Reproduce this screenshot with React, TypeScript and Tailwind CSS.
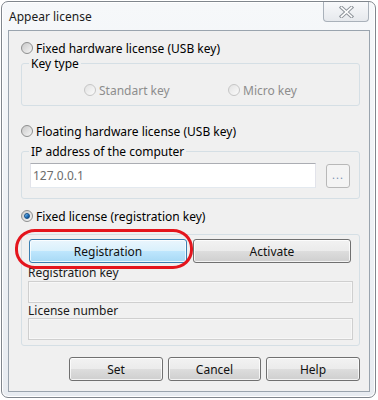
import React from 'react';

const Radio: React.FC<{ checked?: boolean; disabled?: boolean }> = ({ checked, disabled }) => (
  <span
    className={`w-[12px] h-[12px] rounded-full border shrink-0 flex items-center justify-center ${
      disabled
        ? 'border-[#c6c6c6] bg-gradient-to-br from-[#e2e2e2] to-[#fbfbfb]'
        : 'border-[#8e8f8f] bg-gradient-to-br from-[#c9c9c9] to-[#f6f6f6]'
    }`}
  >
    {checked && (
      <span className="w-[6px] h-[6px] rounded-full bg-gradient-to-br from-[#8fd0f6] via-[#2a7cc8] to-[#0d3f7a] border border-[#154f86]" />
    )}
  </span>
);

const Btn: React.FC<{ label: string; hot?: boolean; className?: string }> = ({ label, hot, className }) => (
  <div
    className={`h-[24px] rounded-[3px] border flex items-center justify-center text-[#111] shadow-[inset_0_0_0_1px_rgba(255,255,255,0.75)] ${
      hot
        ? 'border-[#3c7fb1] bg-[linear-gradient(#eaf6fd_0%,#d9f0fc_50%,#bee6fd_51%,#a7d9f5_100%)]'
        : 'border-[#707070] bg-[linear-gradient(#f2f2f2_0%,#ebebeb_50%,#dddddd_51%,#cfcfcf_100%)]'
    } ${className ?? ''}`}
  >
    {label}
  </div>
);

export default function App() {
  return (
    <div
      className="w-[378px] h-[400px] bg-white pt-[1px] pl-[1px] text-[12px] leading-[15px] text-black"
      style={{ fontFamily: '"Noto Sans", "Liberation Sans", sans-serif' }}
    >
      {/* Window frame */}
      <div className="w-[375px] h-[397px] rounded-[7px] border border-[#80868d] bg-gradient-to-b from-[#f6f8fa] to-[#e8ecf1] pl-[6px] pr-[5px] pb-[5px] flex flex-col shadow-[inset_0_0_0_1px_#ffffff]">
        {/* Title bar */}
        <div className="h-[28px] flex items-start justify-between shrink-0">
          <span className="mt-[7px] ml-[1px] text-[#1b1b1b]">Appear license</span>
          <div className="w-[46px] h-[20px] mr-[1px] rounded-b-[4px] border border-t-0 border-[#a9b1ba] bg-gradient-to-b from-[#f8f9fb] to-[#e6e9ed] flex items-center justify-center">
            <svg width="15" height="12" viewBox="0 0 15 12">
              <path d="M2.5 1.5 L12.5 10.5 M12.5 1.5 L2.5 10.5" stroke="#8f959c" strokeWidth="3.6" strokeLinecap="square" />
              <path d="M2.5 1.5 L12.5 10.5 M12.5 1.5 L2.5 10.5" stroke="#ffffff" strokeWidth="1.6" strokeLinecap="square" />
            </svg>
          </div>
        </div>

        {/* Client area */}
        <div className="flex-1 border border-[#9aa4ae] bg-[#f0f0f0] relative pl-[12px] pr-[9px] pt-[9px]">
          {/* Fixed hardware license */}
          <div className="h-[16px] flex items-center gap-[3px]">
            <Radio />
            <span>Fixed hardware license (USB key)</span>
          </div>

          {/* Key type group */}
          <div className="mt-[7px] border border-[#d5dfe5] rounded-[3px] pb-[7px]">
            <span className="block w-fit -mt-[8px] ml-[7px] px-[2px] bg-[#f0f0f0]">Key type</span>
            <div className="mt-[11px] h-[16px] flex items-center pl-[62px] text-[#8d8d8d]">
              <div className="w-[144px] flex items-center gap-[3px]">
                <Radio disabled />
                <span>Standart key</span>
              </div>
              <div className="flex items-center gap-[3px]">
                <Radio disabled />
                <span>Micro key</span>
              </div>
            </div>
          </div>

          {/* Floating hardware license */}
          <div className="mt-[17px] h-[16px] flex items-center gap-[3px]">
            <Radio />
            <span>Floating hardware license (USB key)</span>
          </div>

          {/* IP group */}
          <div className="mt-[12px] border border-[#d5dfe5] rounded-[3px] pb-[10px]">
            <span className="block w-fit -mt-[8px] ml-[7px] px-[2px] bg-[#f0f0f0]">IP address of the computer</span>
            <div className="mt-[4px] ml-[8px] mr-[9px] flex items-center gap-[10px]">
              <div className="w-[287px] h-[25px] bg-white border border-[#abadb3] border-l-[#e2e3ea] border-r-[#e2e3ea] border-b-[#e3e9ef] flex items-center pl-[2px] text-[#6d6d6d]">
                127.0.0.1
              </div>
              <div className="w-[24px] h-[24px] rounded-[3px] border border-[#b8b8b8] bg-[#f4f4f4] flex items-center justify-center pb-[2px] text-[#7a90b0] tracking-[1px] text-[11px]">
                ...
              </div>
            </div>
          </div>

          {/* Fixed license */}
          <div className="mt-[9px] h-[16px] flex items-center gap-[3px]">
            <Radio checked />
            <span>Fixed license (registration key)</span>
          </div>

          {/* Registration group */}
          <div className="mt-[10px] border border-[#d5dfe5] rounded-[3px] px-[6px] pt-[4px] pb-[5px]">
            <div className="flex gap-[6px] px-[1px]">
              <Btn label="Registration" hot className="w-[158px]" />
              <Btn label="Activate" className="w-[158px]" />
            </div>
            <div className="mt-[2px] text-[#1a1a1a]">Registration key</div>
            <div className="mt-[1px] h-[22px] border border-[#cfcfcf] bg-[#f0f0f0] shadow-[inset_0_0_0_1px_#f7f7f7]" />
            <div className="mt-[0px] text-[#1a1a1a]">License number</div>
            <div className="h-[22px] border border-[#cfcfcf] bg-[#f0f0f0] shadow-[inset_0_0_0_1px_#f7f7f7]" />
          </div>

          {/* Dialog buttons */}
          <div className="mt-[11px] flex justify-end gap-[5px]">
            <Btn label="Set" className="w-[94px]" />
            <Btn label="Cancel" className="w-[93px]" />
            <Btn label="Help" className="w-[94px]" />
          </div>

          {/* Red highlight annotation */}
          <div className="absolute left-[6px] top-[198px] w-[178px] h-[40px] border-[3px] border-[#e4151d] rounded-[20px/19px] pointer-events-none" />
        </div>
      </div>
    </div>
  );
}
